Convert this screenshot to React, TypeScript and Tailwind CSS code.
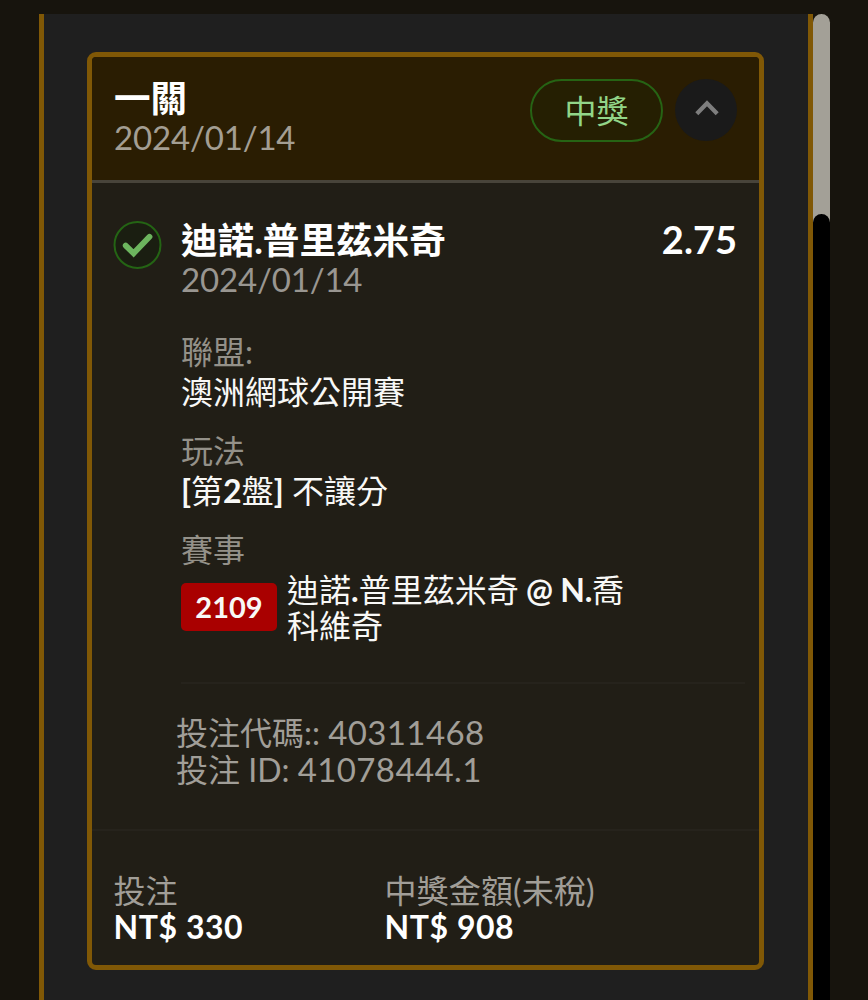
import type { ReactNode } from "react";

function CheckIcon() {
  return (
    <svg className="block" width="49" height="48" viewBox="0 0 49 48" fill="none">
      <circle cx="24.5" cy="24" r="23" fill="#1a1e11" stroke="#246414" strokeWidth="2" />
      <path d="M12.7 24.6 L20.6 32.3 L36.5 15.8" stroke="#6cb55e" strokeWidth="5.8" strokeLinecap="round" />
    </svg>
  );
}

function ChevronIcon() {
  return (
    <svg className="mb-1 ml-px" width="24" height="16" viewBox="0 0 24 16" fill="none">
      <path d="M1.8 13.8 L12 3.2 L22.2 13.8" stroke="#7e7e7e" strokeWidth="4.2" />
    </svg>
  );
}

function Field({ label, children }: { label: string; children: ReactNode }) {
  return (
    <div className="h-[99px]">
      <p className="leading-9 text-[#949189]">{label}</p>
      <div className="mt-1">{children}</div>
    </div>
  );
}

export default function App() {
  return (
    <main
      lang="zh-Hant"
      className="flex h-[1000px] w-[868px] overflow-hidden bg-[#17140d] pt-[14px] pl-[38.5px] font-['Lato','Noto_Sans_CJK_TC',sans-serif] text-[32px] leading-9 text-[#f8f8f6]"
    >
      <section className="h-[986px] w-[774px] border-x-5 border-[#805806] bg-[#1f1f1f] pt-[38px] pl-[43.5px]">
        <article className="h-[918px] w-[677px] overflow-hidden rounded-[9px] border-5 border-[#805806] bg-[#211e16]">
          <header className="flex h-[126px] justify-between border-b-[3px] border-[#48443a] bg-[#2a1d02] pt-[22px] pr-[22px] pl-[22px]">
            <div>
              <h1 className="text-[36.6px] leading-[38px] font-bold text-white">一關</h1>
              <p className="mt-px text-[33px] leading-[38px] tracking-[-0.16px] text-[#a39e93]">2024/01/14</p>
            </div>
            <div className="flex gap-3">
              <span className="flex h-[63px] w-[133px] items-center justify-center rounded-full border-2 border-[#266314] bg-[#251f02] pt-px text-[#92d588]">
                中獎
              </span>
              <button className="flex size-[62px] items-center justify-center rounded-full bg-[#1a1a1a]">
                <ChevronIcon />
              </button>
            </div>
          </header>

          <div className="flex h-[648px] border-b-2 border-[#26231c] pt-[38px] pl-[21px]">
            <CheckIcon />
            <div className="ml-[19px] w-[564px]">
              <div className="flex justify-between pr-2">
                <div>
                  <h2 className="text-[36.6px] leading-[39px] font-bold text-white">迪諾.普里茲米奇</h2>
                  <p className="text-[33px] leading-[38px] tracking-[-0.16px] text-[#999691]">2024/01/14</p>
                </div>
                <p className="-mt-px text-[38px] leading-[38px] font-bold text-white">2.75</p>
              </div>
              <div className="mt-9 h-[350px] border-b-2 border-[#26231c]">
                <Field label="聯盟:">澳洲網球公開賽</Field>
                <Field label="玩法">
                  <b>[</b>第<b>2</b>盤<b>]</b> 不讓分
                </Field>
                <Field label="賽事">
                  <div className="flex">
                    <span className="mt-[11px] flex h-12 w-24 items-center justify-center rounded-[5px] bg-[#a90000] text-[29px] font-bold">
                      2109
                    </span>
                    <p className="ml-[10px]">
                      迪諾<b>.</b>普里茲米奇<b className="tracking-[-0.3px]"> @ N.</b>喬<br />
                      科維奇
                    </p>
                  </div>
                </Field>
              </div>
              <div className="mt-[30px] -ml-[5px] text-[#a19e98]">
                <p>投注代碼:: <span className="text-[33px] tracking-[0.4px]">40311468</span></p>
                <p>投注 ID: <span className="text-[33px] tracking-[0.4px]">41078444.1</span></p>
              </div>
            </div>
          </div>

          <footer className="flex pt-[42px] pl-[21.5px]">
            <div className="w-[271px]">
              <p className="text-[#a19e98]">投注</p>
              <p className="tracking-[0.55px] font-bold text-white">NT$ 330</p>
            </div>
            <div>
              <p className="tracking-[0.15px] text-[#a19e98]">中獎金額(未稅)</p>
              <p className="tracking-[0.55px] font-bold text-white">NT$ 908</p>
            </div>
          </footer>
        </article>
      </section>

      {/* scrollbar */}
      <div className="h-[1000px] w-[17px] rounded-t-full bg-[#a3a097] pt-[200px]">
        <div className="h-[800px] rounded-t-full bg-black" />
      </div>
    </main>
  );
}
